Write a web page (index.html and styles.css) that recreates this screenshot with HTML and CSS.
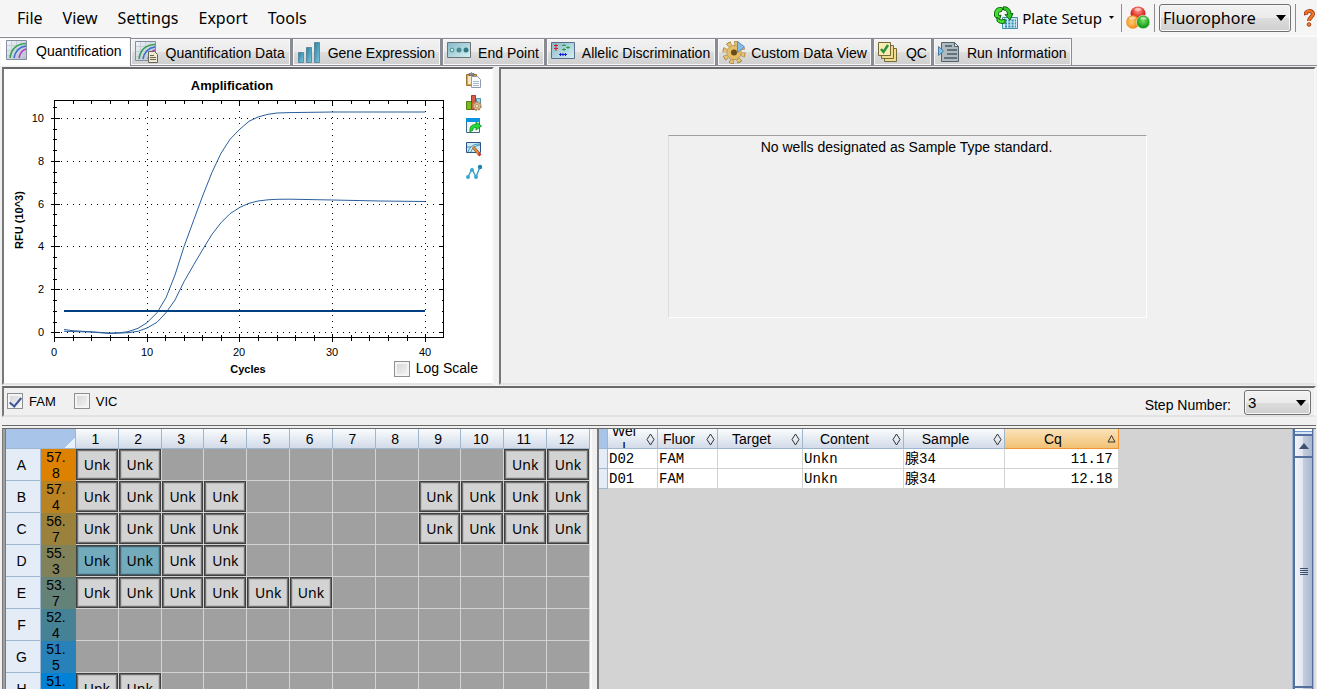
FILE: index.html
```html
<!DOCTYPE html>
<html lang="en">
<head>
<meta charset="utf-8">
<title>Data Analysis</title>
<link rel="stylesheet" href="styles.css">
</head>
<body>
<svg class="defs" aria-hidden="true">
  <defs>
    <linearGradient id="paper" x1="0" y1="0" x2="1" y2="1"><stop offset="0" stop-color="#f2f6fa"/><stop offset="1" stop-color="#b4bccc"/></linearGradient>
    <linearGradient id="teal" x1="0" y1="0" x2="1" y2="1"><stop offset="0" stop-color="#2a7f9f"/><stop offset="1" stop-color="#7cc6e2"/></linearGradient>
    <linearGradient id="screen" x1="0" y1="0" x2="1" y2="1"><stop offset="0" stop-color="#86b8c6"/><stop offset="1" stop-color="#d8f0f4"/></linearGradient>
    <radialGradient id="red" cx=".5" cy=".3"><stop offset="0" stop-color="#ff9a8a"/><stop offset="1" stop-color="#d81f1f"/></radialGradient>
    <radialGradient id="orange" cx=".4" cy=".5"><stop offset="0" stop-color="#ffd070"/><stop offset="1" stop-color="#f08a18"/></radialGradient>
    <radialGradient id="green" cx=".5" cy=".4"><stop offset="0" stop-color="#7be060"/><stop offset="1" stop-color="#129a18"/></radialGradient>
    <symbol id="curves" viewBox="0 0 21 20"><path fill="url(#paper)" stroke="#878da0" d="M.5.5h20v19H.5z"/><path stroke="#c5cedb" d="M5.500 1v18M10.500 1v18M15.500 1v18M1 5.500h19M1 10.500h19M1 15.500h19"/><g fill="none" stroke-width="1.600"><path stroke="#35a04c" d="M4 18C5 10 10 4 20 3.500"/><path stroke="#3a6fd0" d="M8 18c1-6 5-11 12-12"/><path stroke="#b838c8" d="M13 18c1-5 3-8 7-9"/></g></symbol>
  </defs>
</svg>

<header class="menubar">
  <nav class="menus">
    <button>File</button><button>View</button><button>Settings</button><button>Export</button><button>Tools</button>
  </nav>
  <div class="tools">
    <button class="plate">
      <svg width="24" height="24" viewBox="0 0 24 24"><path fill="#cbe8f4" stroke="#3d8fae" d="M8.500 11.500h15v11h-15z"/><path stroke="#2f88b0" stroke-width="2" stroke-dasharray="2 1.300" d="M11 14.500h11M11 17.500h11M11 20.500h11"/><path fill="#45e02f" stroke="#0c5d0c" d="M.5 9C0 4 3 1 7 1.500l2 1L7 6C5 5 4 7 5 10l2-1-2 6-4.500-5z"/><path fill="#2fc926" stroke="#0c5d0c" d="M9 1c4-1 8 2 8 7l2-.5-3 6.500-5-5.500 2.500.5c0-3-1-5-4-5z"/><path fill="#45e02f" stroke="#0c5d0c" d="M3 11c2 3 5 3.500 8 2v4c-3 1-6 .5-8-2z"/></svg>
      <span>Plate Setup</span>
      <svg class="tiny" width="5" height="3" viewBox="0 0 5 3"><path d="M0 0h5L2.500 3z"/></svg>
    </button>
    <span class="sep"></span>
    <button class="balls" aria-label="Fluorophores">
      <svg width="24" height="24" viewBox="0 0 24 24"><ellipse cx="12" cy="7.500" rx="7.500" ry="7" fill="url(#red)"/><circle cx="6.800" cy="16" r="6.700" fill="url(#orange)"/><circle cx="17.200" cy="16" r="6.700" fill="url(#green)" stroke="#f3f7e8" stroke-width=".6"/><path fill="#fff" opacity=".55" d="M8 4c2-3 6-3 8 0-2 1-6 1-8 0zM3 13c1-3 5-3 7-1-2 2-5 2-7 1zM14 13c1-3 5-3 7 0-2 1-5 1-7 0z"/></svg>
    </button>
    <span class="sep"></span>
    <span class="pick"><select class="combo fluor" aria-label="View by"><option>Fluorophore</option></select><svg width="10" height="6" viewBox="0 0 10 6"><path d="M0 0h10L5 6z"/></svg></span>
    <span class="sep"></span>
    <button class="help" aria-label="Help"><svg width="11" height="18" viewBox="0 0 11 18"><path fill="none" stroke="#8d3514" stroke-width="4" d="M2 6C1 1 9 1 9 5c0 3-4 3-4 7"/><path fill="none" stroke="#ee7426" stroke-width="2.600" d="M2 5.500C1 1 9 1 9 5c0 3-4 3-4 7"/><circle cx="5" cy="15.500" r="1.900" fill="#ee7426" stroke="#8d3514" stroke-width=".7"/></svg></button>
  </div>
</header>

<div class="tabs" role="tablist">
  <button class="tab active" role="tab" aria-selected="true"><svg width="21" height="20"><use href="#curves"/></svg>Quantification</button>
  <button class="tab" role="tab"><svg width="24" height="22" viewBox="0 0 24 22"><use href="#curves" width="21" height="20"/><path fill="#eee9d2" stroke="#6b6754" d="M13.500 10.500h6l3 3v8h-9z"/><path stroke="#6b6754" d="M15 14.500h4M15 16.500h6M15 18.500h6"/></svg>Quantification Data</button>
  <button class="tab" role="tab"><svg width="24" height="22" viewBox="0 0 24 22"><path fill="url(#teal)" stroke="#4d7f92" stroke-width=".8" d="M1.500 11.500h5v10h-5z"/><path fill="url(#teal)" stroke="#4d7f92" stroke-width=".8" d="M9.500 6.500h5v15h-5z"/><path fill="url(#teal)" stroke="#4d7f92" stroke-width=".8" d="M17.500 1.500h5v20h-5z"/></svg>Gene Expression</button>
  <button class="tab" role="tab"><svg width="24" height="22" viewBox="0 0 24 22"><path fill="url(#screen)" stroke="#6b7378" d="M.5 1.500h23v15H.5z"/><circle cx="5" cy="9" r="1.900" fill="#c9f0ea" stroke="#3c8b87"/><circle cx="12" cy="9" r="2.500" fill="#468b90"/><circle cx="19" cy="9" r="2.500" fill="#35797e"/></svg>End Point</button>
  <button class="tab" role="tab"><svg width="24" height="22" viewBox="0 0 24 22"><path fill="url(#screen)" stroke="#5b6f8a" d="M.5 1.500h23v16H.5z"/><path stroke="#e01828" d="M3 4.500h4M3 7.500h4M5 3v7"/><path stroke="#2f9f48" d="M11 4.500h4M13 3v2M11 8.500h4M13 7v3M15 6.500h4M17 5v3"/><path stroke="#1722d8" d="M8 13.500h8M9.500 12v3M12 12v3M14.500 12v3"/></svg>Allelic Discrimination</button>
  <button class="tab snug" role="tab"><svg width="24" height="24" viewBox="0 0 24 24"><circle cx="12" cy="12.500" r="9.700" fill="none" stroke="#8b6a25" stroke-width="3.600" stroke-dasharray="4.400 3.218"/><circle cx="12" cy="12.500" r="9.400" fill="none" stroke="#e8c26c" stroke-width="3" stroke-dasharray="3.600 3.783" stroke-dashoffset="-.3"/><circle cx="12" cy="12.500" r="7.200" fill="#e4bd66" stroke="#b48c40" stroke-width=".8"/><circle cx="12" cy="12.500" r="3" fill="#6a4b16"/><path fill="#85bce8" stroke="#5d8fbe" d="M15.500 1.500v11l7-5.500z"/></svg>Custom Data View</button>
  <button class="tab qc" role="tab"><svg width="20" height="22" viewBox="0 0 20 22"><g fill="#f0de8e" stroke="#75683b"><path d="M6.500 7.500h12v13h-12z"/><path d="M3.500 4.500h12v13h-12z"/><path fill="#f8ecb0" d="M.5 1.500h12v13H.5z"/></g><path fill="none" stroke="#2c9240" stroke-width="2.500" d="M3 8l2.500 3L10 4"/></svg>QC</button>
  <button class="tab" role="tab"><svg width="22" height="22" viewBox="0 0 22 22"><path fill="#aebac0" stroke="#52616a" d="M3.500 1.500h13l4 4v15h-17z"/><path fill="#e9eff2" stroke="#52616a" d="M16.500 1.500v4h4z"/><path stroke="#4a5a63" stroke-width="1.500" d="M7 5h7M9 9h10M9 13h10M6 17h13"/><path fill="#82c5ee" stroke="#467ca2" d="M.5 5.500v9l5-4.500z"/></svg>Run Information</button>
</div>

<main class="work">
  <section class="top">
    <div class="panel chart">
      <svg class="plot" viewBox="4 69 458 314" role="img" aria-label="Amplification chart">
        <text class="title" x="232" y="90">Amplification</text>
        <g transform="translate(.5 .5)" class="lines">
          <path class="dots" d="M60 118H438M60 161H438M60 204H438M60 246H438M60 289H438M60 332H438M147 104V332M239 104V332M332 104V332M425 104V332"/>
          <path d="M54 100H443V337H54z"/>
          <path d="M73 334v6M91 334v6M110 334v6M128 334v6M147 333v8M165 334v6M184 334v6M202 334v6M221 334v6M239 333v8M258 334v6M277 334v6M295 334v6M314 334v6M332 333v8M351 334v6M369 334v6M388 334v6M407 334v6M425 333v8M54 333v8"/>
          <path d="M73 100v3M91 100v3M110 100v3M128 100v3M147 100v5M165 100v3M184 100v3M202 100v3M221 100v3M239 100v5M258 100v3M277 100v3M295 100v3M314 100v3M332 100v5M351 100v3M369 100v3M388 100v3M407 100v3M425 100v5"/>
          <path d="M50 332h9M52 322h4M52 311h4M52 300h4M50 289h9M52 279h4M52 268h4M52 257h4M50 246h9M52 236h4M52 225h4M52 214h4M50 204h9M52 193h4M52 182h4M52 172h4M50 161h9M52 150h4M52 139h4M52 129h4M50 118h9M52 107h4"/>
          <path d="M438 332h5M441 322h2M441 311h2M441 300h2M438 289h5M441 279h2M441 268h2M441 257h2M438 246h5M441 236h2M441 225h2M441 214h2M438 204h5M441 193h2M441 182h2M441 172h2M438 161h5M441 150h2M441 139h2M441 129h2M438 118h5M441 107h2"/>
        </g>
        <polyline class="curve" points="64,329.500 73,330.700 91,331.800 110,333 119,332.800 128,331.700 138,328.300 147,322.700 157,312.700 166,297.700 175,275 184,246.700 194,219.300 203,195 212,172.300 221,153.300 230,139.300 240,129 249,121.300 258,117 268,114.300 277,113 290,112.600 333,112 425,112"/>
        <polyline class="curve" points="64,331.300 91,332 110,333.500 128,332.700 138,331.300 147,328 157,322.300 166,312.700 175,300 184,281.700 194,264.300 203,249 212,234.300 221,222.700 230,213.700 240,207.300 249,203.300 258,201 268,199.800 277,199.300 290,199.200 333,200 380,201 425,201.500"/>
        <path class="threshold" d="M64 311H425"/>
        <g class="ylab"><text x="44" y="122">10</text><text x="44" y="165">8</text><text x="44" y="208">6</text><text x="44" y="250">4</text><text x="44" y="293">2</text><text x="44" y="336">0</text></g>
        <g class="xlab"><text x="54" y="356">0</text><text x="147" y="356">10</text><text x="239" y="356">20</text><text x="332" y="356">30</text><text x="425" y="356">40</text></g>
        <text class="axis" x="248" y="373">Cycles</text>
        <text class="axis" transform="translate(23 220) rotate(-90)">RFU (10^3)</text>
      </svg>
      <label class="check log"><input type="checkbox">Log Scale</label>
      <div class="icons">
        <button aria-label="Copy"><svg width="16" height="16" viewBox="0 0 16 16"><path fill="#d9a84e" stroke="#9b7430" d="M.5 2.500h10v11H.5z"/><path fill="#f5e9cc" d="M2 4h6v8H2z"/><path fill="#8a8f94" stroke="#51565a" stroke-width=".6" d="M3 1.500h1.500Q5.500-.5 6.500 1.500H8v2H3z"/><path fill="#f8fafc" stroke="#8e9cac" d="M5.500 4.500h6l3 3v8h-9z"/><path stroke="#a9bccf" d="M7 9.500h6M7 11.500h6M7 13.500h6"/></svg></button>
        <button aria-label="Chart settings"><svg width="16" height="16" viewBox="0 0 16 16"><path fill="#7db81e" stroke="#517f12" d="M.5 6.500h5v8h-5z"/><path fill="#d95a45" stroke="#a03c2e" d="M5.500.5h4v14h-4z"/><path fill="#9ed7ea" stroke="#5793aa" d="M10.500 3.500h4v8h-4z"/><circle cx="11" cy="11" r="4" fill="#d8b98c" stroke="#a08258" stroke-width="1.500" stroke-dasharray="2 1"/><circle cx="11" cy="11" r="1.500" fill="#fff6e4" stroke="#967445" stroke-width=".6"/></svg></button>
        <button aria-label="Export chart"><svg width="16" height="16" viewBox="0 0 16 16"><path fill="#eef3f7" stroke="#436681" d="M.5.5h13v14H.5z"/><path fill="#0c94e0" d="M0 0h14v4H0z"/><path fill="#20dc35" stroke="#0c8d1b" stroke-width=".8" d="M4 14C3.500 8 6 6.500 10 6.500V4l5.500 4-5.500 4V9.500C7 9.500 7 11 7 12z"/></svg></button>
        <button aria-label="Edit chart"><svg width="16" height="16" viewBox="0 0 16 16"><path fill="#cdebf5" stroke="#2e5285" d="M.5 1.500h14v10H.5z"/><path fill="none" stroke="#3e91b0" d="M2 11C4 5 8 3 14 3M5 11c1-4 4-6 9-7M1 6h4"/><path stroke="#8f451f" stroke-width="2.800" d="M7 6l7 8"/><path stroke="#f39332" stroke-width="1.800" d="M7 6l6 7"/><path stroke="#d63b35" stroke-width="2.600" d="M12.500 12.500l2 2"/></svg></button>
        <button aria-label="Line points"><svg width="16" height="16" viewBox="0 0 16 16"><path fill="none" stroke="#3a9fc1" stroke-width="1.400" d="M2 13L6 5l4 8L14 3"/><g fill="#3ba9cd"><circle cx="2" cy="13" r="2"/><circle cx="6" cy="6" r="2"/><circle cx="10" cy="13" r="2"/><circle cx="14" cy="3" r="2.200" fill="#1d86ad"/></g></svg></button>
      </div>
    </div>
    <div class="panel standard"><div class="notice">No wells designated as Sample Type standard.</div></div>
  </section>

  <section class="filter">
    <label class="check"><input type="checkbox" checked>FAM</label>
    <label class="check"><input type="checkbox">VIC</label>
    <label class="steplabel" for="step">Step Number:</label>
    <span class="pick"><select class="combo step" id="step"><option>3</option></select><svg width="10" height="6" viewBox="0 0 10 6"><path d="M0 0h10L5 6z"/></svg></span>
  </section>

  <section class="bottom">
    <div class="plategrid">
      <table class="wells">
        <colgroup><col class="side"><col class="side"><col span="12"></colgroup>
        <thead><tr><th colspan="2" class="corner"></th><th>1</th><th>2</th><th>3</th><th>4</th><th>5</th><th>6</th><th>7</th><th>8</th><th>9</th><th>10</th><th>11</th><th>12</th></tr></thead>
        <tbody>
          <tr><th>A</th><td class="temp ta">57.<br>8</td><td><div>Unk</div></td><td><div>Unk</div></td><td></td><td></td><td></td><td></td><td></td><td></td><td></td><td></td><td><div>Unk</div></td><td><div>Unk</div></td></tr>
          <tr><th>B</th><td class="temp tb">57.<br>4</td><td><div>Unk</div></td><td><div>Unk</div></td><td><div>Unk</div></td><td><div>Unk</div></td><td></td><td></td><td></td><td></td><td><div>Unk</div></td><td><div>Unk</div></td><td><div>Unk</div></td><td><div>Unk</div></td></tr>
          <tr><th>C</th><td class="temp tc">56.<br>7</td><td><div>Unk</div></td><td><div>Unk</div></td><td><div>Unk</div></td><td><div>Unk</div></td><td></td><td></td><td></td><td></td><td><div>Unk</div></td><td><div>Unk</div></td><td><div>Unk</div></td><td><div>Unk</div></td></tr>
          <tr><th>D</th><td class="temp td">55.<br>3</td><td><div class="sel">Unk</div></td><td><div class="sel">Unk</div></td><td><div>Unk</div></td><td><div>Unk</div></td><td></td><td></td><td></td><td></td><td></td><td></td><td></td><td></td></tr>
          <tr><th>E</th><td class="temp te">53.<br>7</td><td><div>Unk</div></td><td><div>Unk</div></td><td><div>Unk</div></td><td><div>Unk</div></td><td><div>Unk</div></td><td><div>Unk</div></td><td></td><td></td><td></td><td></td><td></td><td></td></tr>
          <tr><th>F</th><td class="temp tf">52.<br>4</td><td></td><td></td><td></td><td></td><td></td><td></td><td></td><td></td><td></td><td></td><td></td><td></td></tr>
          <tr><th>G</th><td class="temp tg">51.<br>5</td><td></td><td></td><td></td><td></td><td></td><td></td><td></td><td></td><td></td><td></td><td></td><td></td></tr>
          <tr><th>H</th><td class="temp th">51.</td><td><div>Unk</div></td><td><div>Unk</div></td><td></td><td></td><td></td><td></td><td></td><td></td><td></td><td></td><td></td><td></td></tr>
        </tbody>
      </table>
    </div>
    <div class="results">
      <div class="listing">
        <table class="data">
          <colgroup><col class="c0"><col class="c1"><col class="c2"><col class="c3"><col class="c4"><col class="c4"><col class="c5"></colgroup>
          <thead><tr>
            <th class="sel0"></th>
            <th><div class="head"><span>Wel<br>l</span><svg width="9" height="13" viewBox="0 0 9 13"><path d="M4.500 1L8 6.500 4.500 12 1 6.500z"/></svg></div></th>
            <th><div class="head"><span>Fluor</span><svg width="9" height="13" viewBox="0 0 9 13"><path d="M4.500 1L8 6.500 4.500 12 1 6.500z"/></svg></div></th>
            <th><div class="head"><span>Target</span><svg width="9" height="13" viewBox="0 0 9 13"><path d="M4.500 1L8 6.500 4.500 12 1 6.500z"/></svg></div></th>
            <th><div class="head"><span>Content</span><svg width="9" height="13" viewBox="0 0 9 13"><path d="M4.500 1L8 6.500 4.500 12 1 6.500z"/></svg></div></th>
            <th><div class="head"><span>Sample</span><svg width="9" height="13" viewBox="0 0 9 13"><path d="M4.500 1L8 6.500 4.500 12 1 6.500z"/></svg></div></th>
            <th class="sorted"><div class="head"><span>Cq</span><svg width="9" height="13" viewBox="0 0 9 13"><path d="M4.500 2.500L8 9H1z"/></svg></div></th>
          </tr></thead>
          <tbody>
            <tr><th></th><td>D02</td><td>FAM</td><td></td><td>Unkn</td><td>腺34</td><td class="num">11.17</td></tr>
            <tr><th></th><td>D01</td><td>FAM</td><td></td><td>Unkn</td><td>腺34</td><td class="num">12.18</td></tr>
          </tbody>
        </table>
      </div>
      <div class="scroll">
        <div class="split"></div>
        <div class="up"><svg width="10" height="6" viewBox="0 0 10 6"><path fill="#40506f" d="M5 0l5 6H0z"/></svg></div>
        <div class="thumb"><svg width="8" height="8" viewBox="0 0 8 8"><path stroke="#40506f" d="M0 .5h8M0 2.500h8M0 4.500h8M0 6.500h8"/></svg></div>
        <div class="down"></div>
      </div>
    </div>
  </section>
</main>
</body>
</html>
```
FILE: styles.css
```css
* { box-sizing: border-box; }
body {
  margin: 0;
  height: 100vh;
  overflow: hidden;
  display: flex;
  flex-direction: column;
  background: #f0f0f0;
  color: #000;
  font: 14px/17px "Liberation Sans", Arial, sans-serif;
}
.defs { position: absolute; width: 0; height: 0; }
button { border: 0; padding: 0; background: none; font: inherit; color: inherit; }
svg { display: block; flex: none; }

.menubar {
  flex: none;
  height: 37px;
  display: flex;
  justify-content: space-between;
  background: #f5f5f5;
  border-bottom: 2px solid #fafafa;
  font: 16px/20px "Noto Sans", "Open Sans", sans-serif;
}
.menus { display: flex; align-items: center; gap: 20px; padding-left: 17px; }
.tools { display: flex; align-items: center; gap: 4px; padding-right: 2px; }
.plate { display: flex; align-items: center; gap: 4px; font-size: 15px; }
.plate .tiny { margin: 0 3px; }
.help { margin-left: 4px; }
.sep { width: 1px; height: 28px; background: #8c8c8c; }
.pick { display: grid; align-items: center; }
.pick > * { grid-area: 1 / 1; }
.pick svg { justify-self: end; margin-right: 5px; pointer-events: none; }
.combo {
  appearance: none;
  border: 1px solid #707070;
  border-radius: 3px;
  padding: 0 3px;
  color: #000;
  background: linear-gradient(#f2f2f2, #ebebeb 50%, #dddddd 50%, #cfcfcf);
  box-shadow: inset 0 0 0 1px #f8f8f8;
}
.fluor { width: 132px; height: 28px; font: 16px/20px "Noto Sans", sans-serif; }
.step { width: 67px; height: 25px; font: 15px/17px "Liberation Sans", sans-serif; }

.tabs {
  flex: none;
  height: 29px;
  display: flex;
  align-items: flex-end;
  border-bottom: 1px solid #898c95;
}
.tab {
  height: 27px;
  display: flex;
  align-items: center;
  gap: 7px;
  padding: 2px 5px 0 4px;
  border: 1px solid #898c95;
  border-left-width: 2px;
  border-bottom: 0;
  background: linear-gradient(#f2f2f2, #ebebeb 48%, #dddddd 52%, #cfcfcf);
  box-shadow: inset 0 0 0 1px #f8f8f8;
  font-size: 14px;
  white-space: nowrap;
}
.tab svg { margin-bottom: 2px; }
.tab.active {
  height: 29px;
  margin-bottom: -1px;
  padding: 0 8px 2px 6px;
  gap: 9px;
  border-left: 0;
  background: #fff;
}
.tab.active + .tab { border-left: 0; padding-left: 4px; }
.tab.snug { gap: 5px; padding-right: 4px; }
.tab.qc { gap: 8px; padding-right: 4px; }

.work { flex: 1; min-height: 0; display: flex; flex-direction: column; padding: 1px 1px 0 2px; }
.panel {
  border: 2px solid;
  border-color: #696969 #f7f7f7 #e3e3e3 #787878;
}
.top { flex: none; display: grid; grid-template-columns: 492fr 817fr; column-gap: 5px; }
.chart { display: grid; grid-template-columns: 1fr 30px; background: #fff; }
.plot { grid-area: 1 / 1; width: 100%; height: auto; }
.lines path { fill: none; stroke: #000; shape-rendering: crispEdges; }
.lines .dots { stroke-dasharray: 1 5; }
.curve { fill: none; stroke: #2a5f9c; stroke-width: 1; }
.threshold { stroke: #003f80; stroke-width: 2; }
.plot text { font-size: 11px; text-anchor: middle; }
.plot .ylab text { text-anchor: end; }
.plot .title { font-size: 13px; font-weight: bold; }
.plot .axis { font-weight: bold; }
.log { grid-row: 1; grid-column: 1 / 3; align-self: end; justify-self: end; padding: 0 14px 6px 0; }
.icons { grid-area: 1 / 2; justify-self: start; align-self: start; display: grid; gap: 7px; padding: 3px 0 0 4px; }
.standard { padding-top: 66px; }
.notice {
  width: 59%;
  height: 183px;
  margin: 0 auto;
  padding: 3px 2px 0 0;
  text-align: center;
  border: 1px solid;
  border-color: #a0a0a0 #fff #fff #dcdcdc;
}

.check { display: flex; align-items: center; gap: 6px; }
.check input {
  appearance: none;
  width: 16px;
  height: 16px;
  margin: 0;
  display: grid;
  place-items: center;
  border: 1px solid #8e8f8f;
  background: linear-gradient(135deg, #cfd3d8, #f6f6f6);
  box-shadow: inset 0 0 0 2px #f4f4f4;
}
.check input:checked::after {
  content: "";
  width: 5px;
  height: 10px;
  border: solid #40559a;
  border-width: 0 2px 2px 0;
  transform: rotate(40deg);
}
.filter {
  flex: none;
  display: flex;
  align-items: center;
  gap: 18px;
  margin-top: 1px;
  padding: 2px 3px 0 3px;
  border: 2px solid;
  border-color: #696969 #f7f7f7 #e3e3e3 #787878;
  font-size: 13px;
}
.steplabel { margin-left: auto; padding-top: 6px; font-size: 14px; }
.filter .pick { margin-left: -5px; }
.filter .check { padding-bottom: 3px; }

.bottom {
  flex: 1;
  min-height: 0;
  margin-top: 8px;
  display: grid;
  grid-template-columns: 590fr 719fr;
  column-gap: 5px;
  border-top: 4px double #696969;
}
.plategrid { overflow: hidden; border-left: 4px double #787878; border-right: 2px solid #fafafa; background: #a0a0a0; }
table { border-collapse: separate; border-spacing: 0; table-layout: fixed; }
th, td { padding: 0; font-weight: normal; }
.wells { width: 100%; text-align: center; }
.wells .side { width: 35px; }
.wells thead th {
  height: 20px;
  padding: 2px 3px 0 0;
  background: linear-gradient(#f9fcfd, #d3dbe9);
  border: solid #9eb6ce;
  border-width: 0 1px 1px 0;
}
.wells thead .corner { background: linear-gradient(135deg, #a9c4e9 88%, #e8f0fa 88%); border-color: #9eb6ce; }
.wells tbody th { background: #e4ecf7; border: solid #9eb6ce; border-width: 0 1px 1px 0; padding: 2px 3px 0 0; }
.wells tbody td { height: 32px; border: solid #d3d3d3; border-width: 0 1px 1px 0; font-family: "Noto Sans", sans-serif; }
.wells tbody .temp { border: 0; padding-right: 5px; line-height: 16px; vertical-align: top; font-family: "Liberation Sans", sans-serif; }
.wells tbody div {
  height: 31px;
  line-height: 27px;
  border: 1px solid #404040;
  box-shadow: inset 0 0 0 1px #707070, inset 0 0 0 2px #bcbcbc;
  padding-top: 1px;
  background: #d3d3d3;
}
.wells tbody .sel { background: #73abbd; box-shadow: inset 0 0 0 1px #44636d, inset 0 0 0 2px #659aab; }
.ta { background: #dc8200; }
.tb { background: #b98223; }
.tc { background: #9b823c; }
.td { background: #82825a; }
.te { background: #648278; }
.tf { background: #468296; }
.tg { background: #2882b9; }
.th { background: #0082d7; }

.results { min-width: 0; overflow: hidden; display: flex; border-left: 2px solid #787878; border-right: 2px solid #dedede; background: #d3d3d3; }
.listing { flex: 1; min-width: 0; }
.data { width: 75%; }
.c0 { width: 9px; }
.c1 { width: 50px; }
.c2 { width: 60px; }
.c3 { width: 85px; }
.c4 { width: 101px; }
.data thead th {
  background: linear-gradient(#f9fcfd, #d3dbe9);
  border: solid #9eb6ce;
  border-width: 0 1px 1px 0;
}
.data thead .sel0 { background: #a9c4e9; }
.data thead .sorted { background: linear-gradient(#fbe3b9, #f2c275); border-color: #f29536; }
.data svg path { fill: none; stroke: #333; }
.head { height: 19px; display: flex; align-items: center; overflow: hidden; padding: 2px 2px 0 0; }
.head span { flex: 1; padding-right: 6px; text-align: center; }
.data tbody th { background: #e4ecf7; border: solid #9eb6ce; border-width: 0 1px 1px 0; }
.data tbody td {
  height: 20px;
  padding: 1px 0 0 1px;
  background: #fff;
  border: solid #d3d3d3;
  border-width: 0 1px 1px 0;
  font-family: "Liberation Mono", "Noto Sans CJK SC", monospace;
  line-height: 18px;
}
.data tbody .num { text-align: right; padding-right: 5px; }

.scroll { width: 22px; display: flex; flex-direction: column; border-left: 1px solid #9eb6ce; border-right: 1px solid #9eb6ce; background: #55709f; padding: 0 1px 0 2px; gap: 2px; }
.split { height: 5px; background: linear-gradient(#fff 40%, #6f98c6 40%, #6f98c6 60%, #d5e5f8 60%); }
.up, .thumb, .down { display: grid; place-items: center; background: linear-gradient(90deg, #f2f4fa, #e2e6ef 45%, #c3cddd 50%, #a9b8cf); }
.up { height: 20px; }
.thumb { flex: 1; }
.down { height: 1px; }
```
